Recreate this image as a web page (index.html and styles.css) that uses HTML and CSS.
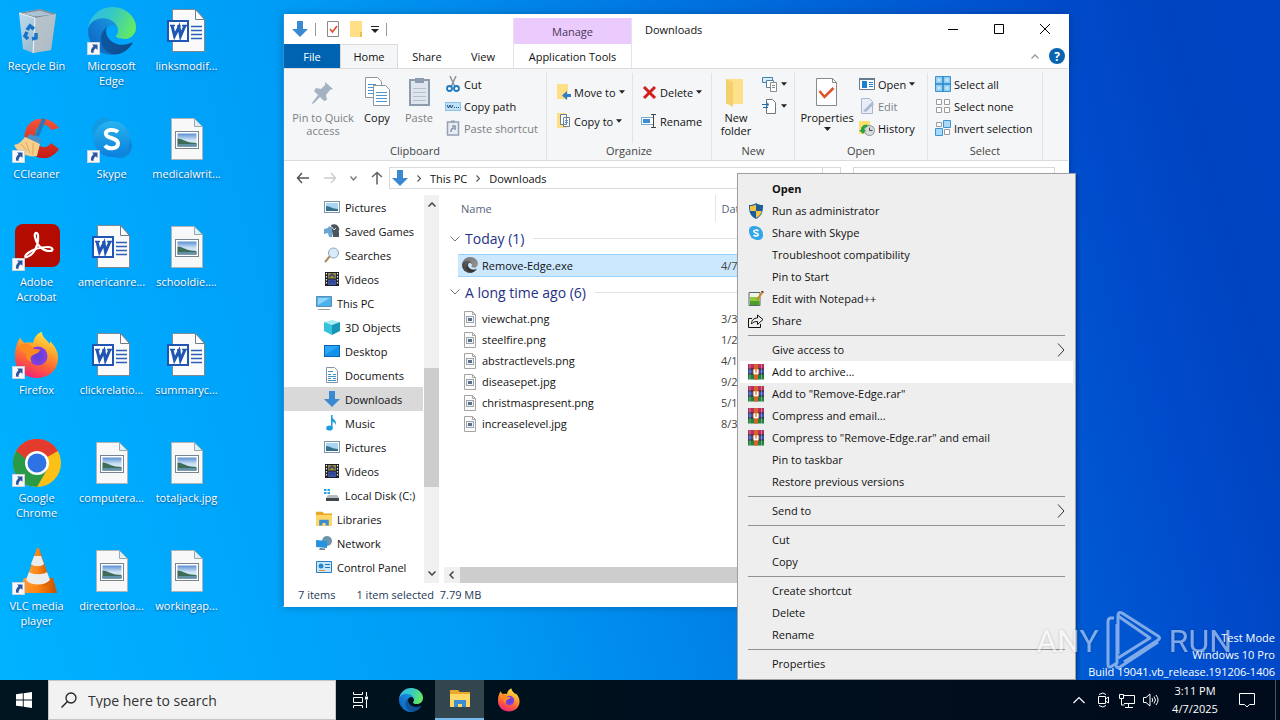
FILE: index.html
```html
<!DOCTYPE html>
<html lang="en">
<head>
<meta charset="utf-8">
<title>Downloads</title>
<link rel="stylesheet" href="styles.css">
</head>
<body>
<svg class="defs" aria-hidden="true">
  <defs>
    <linearGradient id="eg1" x1="0" y1="0" x2="1" y2="0"><stop offset="0" stop-color="#0c59a4"/><stop offset="1" stop-color="#114a8b"/></linearGradient>
    <linearGradient id="eg2" x1="1" y1="0" x2="0" y2="1"><stop offset="0" stop-color="#1b9de2"/><stop offset=".6" stop-color="#1277cf"/><stop offset="1" stop-color="#0d5bb5"/></linearGradient>
    <linearGradient id="eg3" x1="0" y1=".3" x2="1" y2=".6"><stop offset="0" stop-color="#2fbde6"/><stop offset=".45" stop-color="#36c9c4"/><stop offset="1" stop-color="#66eb5e"/></linearGradient>
    <linearGradient id="photo" x1="0" y1="0" x2="0" y2="1"><stop offset="0" stop-color="#5a8fd4"/><stop offset=".5" stop-color="#cfe3f4"/><stop offset="1" stop-color="#dce8f0"/></linearGradient>
    <linearGradient id="ffbody" x1=".7" y1="0" x2=".3" y2="1"><stop offset="0" stop-color="#ffe847"/><stop offset=".35" stop-color="#ffa52d"/><stop offset=".65" stop-color="#ff6138"/><stop offset="1" stop-color="#f0207a"/></linearGradient>
    <radialGradient id="ffglobe"><stop offset="0" stop-color="#5a3fd8"/><stop offset="1" stop-color="#8a3fe0"/></radialGradient>
    <linearGradient id="cone" x1="0" y1="0" x2="1" y2="0"><stop offset="0" stop-color="#ffa03c"/><stop offset=".5" stop-color="#ff8412"/><stop offset="1" stop-color="#c85000"/></linearGradient>
    <linearGradient id="bin" x1="0" y1="0" x2="1" y2="1"><stop offset="0" stop-color="#e4e9ee"/><stop offset="1" stop-color="#9aa7b3"/></linearGradient>
    <linearGradient id="skype" x1="0" y1="0" x2="0" y2="1"><stop offset="0" stop-color="#28b4ee"/><stop offset="1" stop-color="#0b7fdc"/></linearGradient>
    <linearGradient id="ccred" x1="0" y1="0" x2="0" y2="1"><stop offset="0" stop-color="#f4553a"/><stop offset="1" stop-color="#c41a14"/></linearGradient>
  </defs>
  <symbol id="edge" viewBox="0 0 256 256">
    <path fill="url(#eg1)" d="M231 190.500a94 94 0 0 1-10.500 4.700 102 102 0 0 1-35.900 6.500c-47.300 0-88.500-32.600-88.500-74.300a31.500 31.500 0 0 1 16.400-27.300c-42.800 1.800-53.800 46.400-53.800 72.500 0 73.900 68.100 81.400 82.800 81.400 7.900 0 19.800-2.300 27-4.600l1.300-.4a128.300 128.300 0 0 0 66.600-52.800 4 4 0 0 0-5.400-5.700z"/>
    <path fill="url(#eg2)" d="M105.700 241.400a79 79 0 0 1-22.700-21.300 80.700 80.700 0 0 1 29.500-120c3.100-1.500 8.500-4.100 15.500-4a32.400 32.400 0 0 1 25.700 13 31.900 31.900 0 0 1 6.400 18.700c0-.2 24.500-79.600-80-79.600-43.900 0-80 41.600-80 78.200a130 130 0 0 0 12.100 56 128 128 0 0 0 156.400 67.100 75.600 75.600 0 0 1-62.900-8.100z"/>
    <path fill="url(#eg3)" d="M152.300 148.900c-.8 1-3.300 2.500-3.300 5.600 0 2.600 1.700 5.100 4.700 7.200 14.400 10 41.500 8.700 41.600 8.700a59.600 59.600 0 0 0 30.300-8.300 61.400 61.400 0 0 0 30.400-52.900c.3-22.400-8-37.300-11.300-43.900C223.500 23.800 177.700 0 128 0A128 128 0 0 0 0 126.200c.5-36.500 36.800-66 80-66 3.500 0 23.500.3 42 10 16.300 8.600 24.900 18.900 30.900 29.200 6.100 10.700 7.200 24.200 7.200 29.600s-2.700 13.300-7.800 19.900z"/>
  </symbol>
  <symbol id="lnk" viewBox="0 0 13 13">
    <rect x=".5" y=".5" width="12" height="12" fill="#f7f9fc" stroke="#c9d3de"/>
    <path d="M5 2.500h5.500V8L8.800 6.300C7 7.500 6.500 9 6.500 11L4 10.500C3.600 8 4.600 5.700 6.600 4.200z" fill="#2c55a0"/>
  </symbol>
  <symbol id="word" viewBox="2 -1 48 48">
    <path d="M11.500 1.500h23l9 10v32h-32z" fill="#fafafa" stroke="#7d8a96"/>
    <path d="M34.500 1.500v10h9z" fill="#fff" stroke="#6f7d89"/>
    <path d="M30 18.500h11M30 22.500h11M30 26.500h11M30 30.500h11" stroke="#2b5fb8" stroke-width="1.300"/>
    <rect x="7" y="13" width="20" height="20" fill="#fff" stroke="#1f55b3" stroke-width="2"/>
    <path d="M11 17.500l2.500 10.500L18 19l1.500 9L24 17.500" fill="none" stroke="#1f55b3" stroke-width="3"/>
    <path d="M9 17.500h5M16 18h3.500M21 17.500h5" stroke="#1f55b3" stroke-width="1.500"/>
  </symbol>
  <symbol id="imgfile" viewBox="0 -1 48 48">
    <path d="M8.500 2.500h23l8 8v33h-31z" fill="#f8f8f8" stroke="#aeb4b8"/>
    <path d="M31.500 2.500v8h8z" fill="#d9effa" stroke="#9aa"/>
    <rect x="12.500" y="15.500" width="23" height="17" fill="#fff" stroke="#77838f"/>
    <rect x="14.500" y="17.500" width="19" height="13" fill="url(#photo)"/>
    <path d="M14.500 22.500c4 0 8 3 13 4l6 .5v3.500h-19z" fill="#3c6b57"/>
    <path d="M14.500 28h19v2.500h-19z" fill="#6390a8"/>
  </symbol>
  <symbol id="imgsmall" viewBox="0 0 16 16">
    <path d="M2.500 .5h8l3 3v12h-11z" fill="#fbfbfb" stroke="#a4a4a4"/>
    <path d="M10.500 .5v3h3" fill="none" stroke="#a4a4a4"/>
    <rect x="4.500" y="5.500" width="7" height="6" fill="#f1f4f7" stroke="#9aa4ad"/><rect x="6" y="7" width="4" height="3" fill="#587089"/>
  </symbol>
  <symbol id="firefox" viewBox="0 0 48 48">
    <path d="M4 13c1-4 3-5 3-7 1 3 3 5 5 6 3-1 5-1 8 0 1-5 4-10 9-11 0 5 4 7 8 12 0-2 0-2 0-3 5 5 9 12 8 19-1 11-10 18-21 18S2 39 2 27c0-5 0-9 2-14z" fill="url(#ffbody)"/>
    <circle cx="25" cy="25" r="9.500" fill="url(#ffglobe)"/>
    <path d="M6 15c6-4 12-2 15 3 2 0 5 0 6 1-1 3-5 4-7 5-3 2-3 4-1 7-5-1-7-5-6-9-4-1-6-3-7-7z" fill="#ff8a1f"/>
  </symbol>
  <symbol id="arrowdn" viewBox="0 0 16 16"><path d="M5 0h6v8h5l-8 8-8-8h5z" fill="#3a8ad2"/></symbol>
  <symbol id="car" viewBox="0 0 7 4"><path d="M0 0h7L3.500 4z" fill="#222"/></symbol>
  <symbol id="pic" viewBox="0 0 16 16"><rect x=".5" y="2.500" width="15" height="11" fill="#fff" stroke="#7f95a8"/><path d="M2 4h12v8H2z" fill="#a9d6f2"/><path d="M2 7c4 0 6 3 12 3v2H2z" fill="#35718c"/></symbol>
  <symbol id="vid" viewBox="0 0 16 16"><rect x="1" y="1" width="14" height="14" fill="#1d1d22"/><rect x="4" y="2" width="8" height="5.500" fill="#9a8a35"/><rect x="4" y="8.500" width="8" height="5.500" fill="#3b53a8"/><path d="M5 6l3-3 3 3M5 12l3-2 3 2" stroke="#2b3d80" stroke-width="1.500" fill="none"/><path d="M2.500 2v12M13.500 2v12" stroke="#eee" stroke-width="1.200" stroke-dasharray="1.500 1.500"/></symbol>
  <symbol id="explorer" viewBox="0 0 24 24"><path d="M2 3h8l2 2h10v15H2z" fill="#e9a82a"/><path d="M2 7h20v13H2z" fill="#ffd766"/><path d="M6 20v-7h12v7h-4v-3h-4v3z" fill="#3b8ed0"/></symbol>
  <symbol id="rar" viewBox="0 0 16 16"><rect width="16" height="5" fill="#b8305e"/><rect y="5" width="16" height="5" fill="#3d51a8"/><rect y="10" width="16" height="5.500" fill="#24803f"/><path d="M0 5h16M0 10h16" stroke="#26202a"/><rect x="6" width="4" height="15.500" fill="#d9622a"/><rect x="5" y="5" width="6" height="5.500" fill="#e8873c"/><path d="M6.500 5.500v4h3v-4" fill="none" stroke="#fff" stroke-width="1.500"/><path d="M2 0v15.500M13.500 0v15.500" stroke="#fff" stroke-opacity=".35"/></symbol>
  <symbol id="sq4" viewBox="0 0 16 16"><path d="M1.500 1.500h5v5h-5zM9.500 1.500h5v5h-5zM1.500 9.500h5v5h-5zM9.500 9.500h5v5h-5z" fill="#fff" stroke="#9a9a9a"/></symbol>
</svg>

<main class="desktop">
  <div class="icons">
    <a class="ico" href="#"><svg viewBox="0 0 48 48"><path d="M6 6l21-4 16 5-5 36-18 3-10-4z" fill="url(#bin)" opacity=".85"/><path d="M6 6l21-4 16 5-21 4z" fill="#7b8790"/><path d="M9 6.500l18-3 13 4-18 2z" fill="#a9c3d4"/><path d="M22 11l21-4-5 36-18 3z" fill="#b9c0c6" opacity=".8"/><path d="M6 6l16 5-2 35" fill="none" stroke="#f2f5f7"/><g fill="none" stroke="#1673c9" stroke-width="3.500"><path d="M14 23l3-4 4 3"/><path d="M23 26l0 5-4 1"/><path d="M15 32l-3-3 2-4"/></g></svg><span>Recycle Bin</span></a>
    <a class="ico" href="#"><svg viewBox="0 0 48 48"><path d="M46 13C38 1 19 0 13 14c-5 13 3 28 16 29 7 1 13-3 17-9l-8-6c-4 6-11 5-14 0-4-8-1-16 4-18 5-1 8 1 10 5z" fill="url(#ccred)"/><path d="M31 4l-7 17" stroke="#2b78b8" stroke-width="4"/><path d="M17 19l12 5-3 6-14-6z" fill="#4a90c8"/><path d="M12 22l15 7-3 12c-9 2-19-3-23-11 5-1 8-4 11-8z" fill="#f6cf8e"/><path d="M8 29l6 7M13 27l4 11M20 28v12" stroke="#dba75b"/></svg><svg class="link"><use href="#lnk"/></svg><span>CCleaner</span></a>
    <a class="ico" href="#"><svg viewBox="0 0 48 48"><rect x="2" y="1" width="45" height="43" rx="8" fill="#b30b00"/><path d="M14 34c6-2 12-10 11-22-1-4-4-2-3 2 2 9 8 14 15 14 4 0 3-4-2-4-9 0-16 3-20 6-4 3-3 5-1 4z" fill="none" stroke="#fff" stroke-width="2.200"/></svg><svg class="link"><use href="#lnk"/></svg><span>Adobe Acrobat</span></a>
    <a class="ico" href="#"><svg><use href="#firefox"/></svg><svg class="link"><use href="#lnk"/></svg><span>Firefox</span></a>
    <a class="ico" href="#"><svg viewBox="0 0 48 48"><circle cx="24" cy="24" r="24" fill="#fbc116"/><path d="M24 24L3.200 12a24 24 0 0 1 41.600 0z" fill="#e33b2e"/><path d="M3.200 12A24 24 0 0 0 24 48l10.400-18z" fill="#2a9a46"/><path d="M3.200 12l10.400 18L24 13z" fill="#2a9a46"/><path d="M3.200 12A24 24 0 0 1 44.800 12H24A12 12 0 0 0 13 20z" fill="#e33b2e"/><circle cx="24" cy="24" r="12" fill="#fff"/><circle cx="24" cy="24" r="9.500" fill="#2f72e4"/></svg><svg class="link"><use href="#lnk"/></svg><span>Google Chrome</span></a>
    <a class="ico" href="#"><svg viewBox="0 0 48 48"><path d="M11 31h29l4 15H5z" fill="url(#cone)"/><path d="M24 1h2l11 33c-4 8-20 8-24 0z" fill="url(#cone)"/><path d="M21 9h7l3 8c-3 3-10 3-13 0z" fill="#ececec"/><path d="M16 25c4 3 14 3 18 0l3 8c-5 6-19 6-24 0z" fill="#ececec"/></svg><svg class="link"><use href="#lnk"/></svg><span>VLC media player</span></a>

    <a class="ico" href="#"><svg><use href="#edge"/></svg><svg class="link"><use href="#lnk"/></svg><span>Microsoft Edge</span></a>
    <a class="ico" href="#"><svg viewBox="0 0 48 48"><circle cx="16" cy="15" r="12" fill="#129be4"/><circle cx="32" cy="31" r="12" fill="#0f86d8"/><circle cx="24" cy="24" r="18" fill="url(#skype)"/><path d="M30 17c-3-3-13-3-12 2 0 5 12 3 12 9.500 0 6-10 6-13 2" fill="none" stroke="#fff" stroke-width="4"/></svg><svg class="link"><use href="#lnk"/></svg><span>Skype</span></a>
    <a class="ico" href="#"><svg><use href="#word"/></svg><span>americanre...</span></a>
    <a class="ico" href="#"><svg><use href="#word"/></svg><span>clickrelatio...</span></a>
    <a class="ico" href="#"><svg><use href="#imgfile"/></svg><span>computera...</span></a>
    <a class="ico" href="#"><svg><use href="#imgfile"/></svg><span>directorloa...</span></a>

    <a class="ico" href="#"><svg><use href="#word"/></svg><span>linksmodif...</span></a>
    <a class="ico" href="#"><svg><use href="#imgfile"/></svg><span>medicalwrit...</span></a>
    <a class="ico" href="#"><svg><use href="#imgfile"/></svg><span>schooldie....</span></a>
    <a class="ico" href="#"><svg><use href="#word"/></svg><span>summaryc...</span></a>
    <a class="ico" href="#"><svg><use href="#imgfile"/></svg><span>totaljack.jpg</span></a>
    <a class="ico" href="#"><svg><use href="#imgfile"/></svg><span>workingap...</span></a>
  </div>

  <section class="window">
    <header class="head">
      <div class="head-left">
        <div class="qat">
          <svg class="i16"><use href="#arrowdn"/></svg><i class="bar"></i>
          <svg class="i16" viewBox="0 0 16 16"><path d="M2.500.5h11v15h-11z" fill="#fff" stroke="#8a8a8a"/><path d="M5 8l2.500 3L12 5" fill="none" stroke="#d9512c" stroke-width="1.700"/></svg>
          <svg class="i16" viewBox="0 0 16 16"><path d="M2 0h12v16H2z" fill="#ffdf85"/><path d="M12 11h2v5h-2z" fill="#e9bf4f"/></svg>
          <svg class="qdrop" viewBox="0 0 8 7"><path d="M0 .5h8" stroke="#222"/><path d="M0 3h8L4 7z" fill="#222"/></svg><i class="bar"></i>
        </div>
        <nav class="tabs"><button class="tab file">File</button><button class="tab home">Home</button><button class="tab share">Share</button><button class="tab view">View</button></nav>
      </div>
      <div class="ctx"><div class="ctx-top">Manage</div><button class="tab">Application Tools</button></div>
      <div class="head-right">
        <div class="title"><h1>Downloads</h1>
          <div class="controls">
            <button aria-label="Minimize"><svg viewBox="0 0 10 10"><path d="M0 5.500h10" stroke="#000"/></svg></button>
            <button aria-label="Maximize"><svg viewBox="0 0 10 10"><path d="M.5.5h9v9h-9z" fill="none" stroke="#000"/></svg></button>
            <button aria-label="Close"><svg viewBox="0 0 10 10"><path d="M0 0l10 10M10 0L0 10" stroke="#000"/></svg></button>
          </div>
        </div>
        <div class="help"><svg class="fold" viewBox="0 0 8 5"><path d="M.5 4.500L4 1l3.500 3.500" fill="none" stroke="#999" stroke-width="1.300"/></svg><button class="q" aria-label="Help">?</button></div>
      </div>
    </header>

    <div class="ribbon">
      <div class="group g-clip">
        <div class="tools">
          <button class="big dim pin"><svg viewBox="0 0 32 32"><path d="M18 6l8 7-3 1-4 5 1 5-3 1-4-4-7 7-1-1 6-8-4-4 2-3 5 1 4-4z" fill="#a5b2c2"/></svg>Pin to Quick access</button>
          <button class="big copy"><svg viewBox="0 0 32 32"><g fill="#fff" stroke="#8a97a3"><path d="M4.500 1.500h12l4 4v16h-16z"/><path d="M12.500 9.500h12l4 4v16h-16z"/></g><path d="M7 8.500h8M7 11.500h5M7 14.500h5M7 17.500h5M15 16.500h11M15 19.500h11M15 22.500h11M15 25.500h11" stroke="#4f94cf"/></svg>Copy</button>
          <button class="big dim paste"><svg viewBox="0 0 32 32"><rect x="7" y="4" width="19" height="25" fill="#dfe5ec" stroke="#8d9bae" stroke-width="2"/><path d="M12 2h9v5h-9z" fill="#8d9bae"/><path d="M10 12.500h13M10 16.500h13M10 20.500h13M10 24.500h13" stroke="#b6c0cc"/></svg>Paste</button>
          <div class="stack">
            <button class="row"><svg viewBox="0 0 16 16"><path d="M5 0l5 11M11 0L6 11" stroke="#8b959e" stroke-width="1.500"/><circle cx="4.500" cy="12.500" r="2.500" fill="none" stroke="#1e7ac0" stroke-width="1.800"/><circle cx="11.500" cy="12.500" r="2.500" fill="none" stroke="#1e7ac0" stroke-width="1.800"/></svg>Cut</button>
            <button class="row"><svg viewBox="0 0 16 16"><rect x=".5" y="4.500" width="15" height="8" fill="#bfe0f7" stroke="#8ec0e6"/><path d="M2 7l1.500 3L5 7l1.500 3L8 7M9 9.500h1M11 9.500h1M13 9.500h1" fill="none" stroke="#1b4d7a"/></svg>Copy path</button>
            <button class="row dim"><svg viewBox="0 0 16 16"><rect x="2.500" y="2" width="11" height="13" fill="#e8edf3" stroke="#93a1b3" stroke-width="1.500"/><path d="M6 .5h4v2H6z" fill="#93a1b3"/><path d="M6 12c0-3 1-4 3-4M7 6h3v4" fill="none" stroke="#8191b0" stroke-width="1.500"/></svg>Paste shortcut</button>
          </div>
        </div><div class="glabel">Clipboard</div>
      </div>
      <div class="group g-org">
        <div class="tools">
          <div class="stack wide div">
            <button class="row"><svg viewBox="0 0 16 16"><path d="M2 0h11v15H2z" fill="#ffdf85"/><path d="M16 10h-4V7l-5 4.500 5 4.500v-3h4z" fill="#2e7fc6"/></svg>Move to<svg class="car"><use href="#car"/></svg></button>
            <button class="row"><svg viewBox="0 0 16 16"><path d="M2 0h9v15H2z" fill="#ffdf85"/><path d="M5.500 1.500h6v10h-6zM8.500 4.500h6v9h-6z" fill="#fff" stroke="#6b7f93"/><path d="M10 7.500h3M10 9.500h3" stroke="#4f94cf"/></svg>Copy to<svg class="car"><use href="#car"/></svg></button>
          </div>
          <div class="stack wide">
            <button class="row"><svg viewBox="0 0 16 16"><path d="M3 3l11 11M14 3L3 14" stroke="#d1201b" stroke-width="3"/></svg>Delete<svg class="car"><use href="#car"/></svg></button>
            <button class="row"><svg viewBox="0 0 16 16"><rect x=".5" y="4.500" width="12" height="7" fill="#fff" stroke="#7fa8c9"/><path d="M2 6h7v4H2z" fill="#3c8fd6"/><path d="M10 1.500h5M10 14.500h5M12.500 2v12" stroke="#444"/></svg>Rename</button>
          </div>
        </div><div class="glabel">Organize</div>
      </div>
      <div class="group g-new">
        <div class="tools">
          <button class="big newf"><svg viewBox="0 0 32 32"><path d="M6 3h17v25H6z" fill="#ffe08a"/><path d="M6 3l7 3v25l-7-4z" fill="#f5cf6b"/></svg>New folder</button>
          <div class="stack">
            <button class="row" aria-label="New item"><svg viewBox="0 0 16 16"><path d="M.5 1.500h10v5H.5z" fill="#d8ecf8" stroke="#3c83b4"/><path d="M4.500 4.500h7v7h-7z" fill="#fff" stroke="#5a7f9c"/><path d="M8.500 6.500h6v9h-6z" fill="#fff" stroke="#8a8a8a"/><path d="M10 9.500h3M10 11.500h3" stroke="#888"/></svg><svg class="car"><use href="#car"/></svg></button>
            <button class="row" aria-label="Easy access"><svg viewBox="0 0 16 16"><path d="M4.500 1.500h6l3 3v11h-9z" fill="#fff" stroke="#777"/><path d="M0 6.500h6M1 9.500h5M4 4l3 2.500L4 9" fill="none" stroke="#1e6fb0"/></svg><svg class="car"><use href="#car"/></svg></button>
          </div>
        </div><div class="glabel">New</div>
      </div>
      <div class="group g-open">
        <div class="tools">
          <button class="big prop"><svg viewBox="0 0 32 32"><path d="M5.500 2.500h16l4 4v23h-20z" fill="#fff" stroke="#8a8a8a"/><path d="M21.500 2.500v4h4" fill="none" stroke="#8a8a8a"/><path d="M8.500 15l5 6 9-9" fill="none" stroke="#dd5427" stroke-width="2.500"/></svg>Properties<svg class="car"><use href="#car"/></svg></button>
          <div class="stack">
            <button class="row"><svg viewBox="0 0 16 16"><path d="M.5 2.500h15v11H.5z" fill="#fff" stroke="#667b8e"/><path d="M0 2h16v2H0z" fill="#667b8e"/><path d="M3 5h5v7H3z" fill="#1c7fd0"/><path d="M10 6.500h4M10 8.500h4M10 10.500h4" stroke="#1c7fd0"/></svg>Open<svg class="car"><use href="#car"/></svg></button>
            <button class="row dim"><svg viewBox="0 0 16 16"><path d="M2.500 .5h8l3 3v12h-11z" fill="#e9eef6" stroke="#a9b5c9"/><path d="M4 13l9-9 2 2-8 8z" fill="#a9b8d3"/></svg>Edit</button>
            <button class="row"><svg viewBox="0 0 16 16"><path d="M0 1h11v13H0z" fill="#ffdf70"/><circle cx="10.500" cy="10.500" r="5" fill="#d7dbde" stroke="#8b9399"/><path d="M10.500 7.500v3h3" fill="none" stroke="#444"/><path d="M2 10c0-4 3-6 7-5l-1 2C6 7 5 8 5 10h2l-3 4-4-4z" fill="#27a343"/></svg>History</button>
          </div>
        </div><div class="glabel">Open</div>
      </div>
      <div class="group g-sel">
        <div class="tools"><div class="stack">
          <button class="row"><svg viewBox="0 0 16 16"><path d="M.5.5h15v15H.5z" fill="#8fcdf5" stroke="#3d92cf"/><path d="M8 0v16M0 8h16" stroke="#2a86c8" stroke-width="1.500"/><path d="M2.500 2.500h3v3h-3zM10.500 2.500h3v3h-3zM2.500 10.500h3v3h-3zM10.500 10.500h3v3h-3z" fill="#c9e8fb"/></svg>Select all</button>
          <button class="row"><svg><use href="#sq4"/></svg>Select none</button>
          <button class="row"><svg viewBox="0 0 16 16"><path d="M1.500 2.500h5v4h-5zM9.500 9.500h5v5h-5z" fill="#fff" stroke="#9a9a9a"/><path d="M8.500.5h7v7h-7zM.5 8.500h7v7h-7z" fill="#a7d9fa" stroke="#3d92cf"/></svg>Invert selection</button>
        </div></div><div class="glabel">Select</div>
      </div>
    </div>

    <div class="address">
      <div class="arrows">
        <svg viewBox="0 0 14 14"><path d="M13 7H1.500M6 2L1.500 7 6 12" fill="none" stroke="#555" stroke-width="1.500"/></svg>
        <svg viewBox="0 0 14 14"><path d="M1 7h11.500M8 2l4.500 5L8 12" fill="none" stroke="#ccc" stroke-width="1.300"/></svg>
        <svg class="tiny" viewBox="0 0 7 5"><path d="M.5.500l3 3.500 3-3.500" fill="none" stroke="#777" stroke-width="1.300"/></svg>
        <svg viewBox="0 0 14 14"><path d="M7 13.500V1.500M2 6l5-4.500L12 6" fill="none" stroke="#666" stroke-width="1.600"/></svg>
      </div>
      <div class="crumbs"><svg class="i16"><use href="#arrowdn"/></svg><svg class="ch" viewBox="0 0 4 7"><path d="M.5.500l3 3-3 3" fill="none" stroke="#555" stroke-width="1.200"/></svg><span>This PC</span><svg class="ch" viewBox="0 0 4 7"><path d="M.5.500l3 3-3 3" fill="none" stroke="#555" stroke-width="1.200"/></svg><span>Downloads</span><i class="refresh"></i></div>
      <input class="find" type="text" aria-label="Search Downloads">
    </div>

    <div class="panes">
      <nav class="tree">
        <a href="#"><svg><use href="#pic"/></svg>Pictures</a>
        <a href="#"><svg viewBox="0 0 16 16"><path d="M7 2c4-2 7 0 8 3 1 2-1 3 0 5v4H9z" fill="#4d555c"/><path d="M0 6l4-1 1-2 3 2v9H5l-1-4-4 1z" fill="#6aa5d4"/><path d="M8 4l2 3 2-2" stroke="#ddd" fill="none"/></svg>Saved Games</a>
        <a href="#"><svg viewBox="0 0 16 16"><path d="M1 15l5-6" stroke="#b08a5b" stroke-width="2"/><circle cx="9.500" cy="6" r="5" fill="#d7ecf8" stroke="#8fa3b2"/></svg>Searches</a>
        <a href="#"><svg><use href="#vid"/></svg>Videos</a>
        <a class="top" href="#"><svg viewBox="0 0 16 16"><path d="M.5 1.500h15v10H.5z" fill="#4ab3ee" stroke="#5d8db0"/><path d="M2 3h12L2 10z" fill="#8fd4fa"/><path d="M2 14.500h12" stroke="#8fa1ae"/></svg>This PC</a>
        <a href="#"><svg viewBox="0 0 16 16"><path d="M0 3l8-2 8 2-8 3z" fill="#a8ecf4"/><path d="M0 3l8 3v10l-8-4z" fill="#35c3dc"/><path d="M16 3L8 6v10l8-4z" fill="#1598b8"/></svg>3D Objects</a>
        <a href="#"><svg viewBox="0 0 16 16"><path d="M0 2h16v12H0z" fill="#0a66b4"/><path d="M1 3h14v10H1z" fill="#1391ea"/><path d="M1 3h14L1 12z" fill="#2aa6f6"/></svg>Desktop</a>
        <a href="#"><svg viewBox="0 0 16 16"><path d="M2.500.5h8l3 3v12h-11z" fill="#fff" stroke="#8594a3"/><path d="M4 4.500h5M4 7.500h3M9 7.500h3M4 9.500h8M4 11.500h3M9 11.500h3M4 13.500h8" stroke="#3f93c9"/></svg>Documents</a>
        <a class="on" href="#"><svg><use href="#arrowdn"/></svg>Downloads</a>
        <a href="#"><svg viewBox="0 0 16 16"><path d="M7 0c0 4 6 4 5 10-1-3-3-3-4-3v6H7z" fill="#1f9be0"/><path d="M7 0h1.500v13H7z" fill="#1f9be0"/><ellipse cx="5.500" cy="13" rx="3.300" ry="2.600" fill="#1f9be0"/></svg>Music</a>
        <a href="#"><svg><use href="#pic"/></svg>Pictures</a>
        <a href="#"><svg><use href="#vid"/></svg>Videos</a>
        <a href="#"><svg viewBox="0 0 16 16"><path d="M0 2h2.500v2H0zM3.500 2H6v2H3.500zM0 5h2.500v2H0zM3.500 5H6v2H3.500z" fill="#21a7e0"/><path d="M4 8h9l2 3H2z" fill="#b6bbbf"/><path d="M2 11h13v3H2z" fill="#3f464c"/></svg>Local Disk (C:)</a>
        <a class="top" href="#"><svg viewBox="2 3 20 18"><use href="#explorer" width="24" height="24"/></svg>Libraries</a>
        <a class="top" href="#"><svg viewBox="0 0 16 16"><circle cx="11" cy="6" r="5" fill="#6f94ae"/><path d="M0 5l11 1v7L0 12z" fill="#2694dc"/><path d="M4 13l5 .5v1.500H3z" fill="#6b8496"/></svg>Network</a>
        <a class="top" href="#"><svg viewBox="0 0 16 16"><path d="M.5 2.500h15v11H.5z" fill="#cbe8fa" stroke="#267fc0"/><circle cx="5" cy="7" r="2.500" fill="#2b87cb"/><path d="M9 5.500h5M9 8.500h5" stroke="#1f74b5"/><path d="M3 11.500h6" stroke="#e58c2a"/></svg>Control Panel</a>
      </nav>
      <div class="vbar">
        <svg viewBox="0 0 8 5"><path d="M.5 4.500L4 1l3.500 3.500" fill="none" stroke="#444" stroke-width="1.500"/></svg>
        <div class="thumb"></div>
        <svg viewBox="0 0 8 5"><path d="M.5.500L4 4 7.500.5" fill="none" stroke="#444" stroke-width="1.500"/></svg>
      </div>
      <div class="list">
        <table>
          <thead><tr><th class="name">Name</th><th>Date modified</th></tr></thead>
          <tbody>
            <tr class="sec first"><td colspan="2"><div><svg viewBox="0 0 10 6"><path d="M.5.5L5 5 9.500.5" fill="none" stroke="#777"/></svg>Today (1)<i></i></div></td></tr>
            <tr class="pick"><td><div><svg class="grey"><use href="#edge"/></svg>Remove-Edge.exe</div></td><td>4/7/2025</td></tr>
            <tr class="sec"><td colspan="2"><div><svg viewBox="0 0 10 6"><path d="M.5.5L5 5 9.500.5" fill="none" stroke="#777"/></svg>A long time ago (6)<i></i></div></td></tr>
            <tr><td><div><svg><use href="#imgsmall"/></svg>viewchat.png</div></td><td>3/3</td></tr>
            <tr><td><div><svg><use href="#imgsmall"/></svg>steelfire.png</div></td><td>1/2</td></tr>
            <tr><td><div><svg><use href="#imgsmall"/></svg>abstractlevels.png</div></td><td>4/1</td></tr>
            <tr><td><div><svg><use href="#imgsmall"/></svg>diseasepet.jpg</div></td><td>9/2</td></tr>
            <tr><td><div><svg><use href="#imgsmall"/></svg>christmaspresent.png</div></td><td>5/1</td></tr>
            <tr><td><div><svg><use href="#imgsmall"/></svg>increaselevel.jpg</div></td><td>8/3</td></tr>
          </tbody>
        </table>
        <div class="hbar"><svg viewBox="0 0 5 8"><path d="M4.500.5L1 4l3.500 3.500" fill="none" stroke="#444" stroke-width="1.500"/></svg><div class="hthumb"></div></div>
      </div>
    </div>
    <footer class="status"><span>7 items</span><span>1 item selected&nbsp; 7.79 MB</span></footer>
  </section>

  <ul class="menu">
    <li><button class="b">Open</button></li>
    <li><button><svg viewBox="0 0 16 16"><path d="M8 0c2 1.500 4 2 7 2 0 7-1 11-7 14C2 13 1 9 1 2c3 0 5-.5 7-2z" fill="#1c5d9c"/><path d="M8 1.500V8H2.200C2 6 2 4.500 2 3c2.500 0 4-.5 6-1.500zM8 8h5.800c-.5 3-2 5-5.800 6.800z" fill="#f6c443"/></svg>Run as administrator</button></li>
    <li><button><svg viewBox="0 0 16 16"><rect x="1" y="1" width="10" height="10" rx="4.500" fill="#34a6e8"/><rect x="5" y="5" width="10" height="10" rx="4.500" fill="#34a6e8"/><circle cx="8" cy="8" r="6.500" fill="#34a6e8"/><path d="M10.500 6C9 4.500 5.500 5 5.800 6.500 6 8.500 10.300 7.500 10.300 9.500 10.300 11.500 6.500 11.500 5.500 10" fill="none" stroke="#fff" stroke-width="1.500"/></svg>Share with Skype</button></li>
    <li><button>Troubleshoot compatibility</button></li>
    <li><button>Pin to Start</button></li>
    <li><button><svg viewBox="0 0 16 16"><path d="M1 1.500h11v13H1z" fill="#eef5e6" stroke="#5b6770"/><path d="M2 6h9.500v8H2z" fill="#8ecb3c"/><path d="M2 10h9.500v4H2z" fill="#4f9d2d"/><path d="M14.500 1L9 9" stroke="#c9852e" stroke-width="2"/><path d="M13.500 0l2 1.500" stroke="#7b2020" stroke-width="1.500"/></svg>Edit with Notepad++</button></li>
    <li><button><svg viewBox="0 0 16 16"><path d="M4 5.500H.5v9h12V11" fill="none" stroke="#111"/><path d="M9.500 2v3C6 5 3.500 7 3.500 11 5 9 7 8.500 9.500 8.500v3L15 6.500z" fill="none" stroke="#111"/></svg>Share</button></li>
    <li class="sep"></li>
    <li><button>Give access to<svg class="sub" viewBox="0 0 8 14"><path d="M1 .5L7 7l-6 6.500" fill="none" stroke="#333"/></svg></button></li>
    <li><button class="hot"><svg><use href="#rar"/></svg>Add to archive...</button></li>
    <li><button><svg><use href="#rar"/></svg>Add to "Remove-Edge.rar"</button></li>
    <li><button><svg><use href="#rar"/></svg>Compress and email...</button></li>
    <li><button><svg><use href="#rar"/></svg>Compress to "Remove-Edge.rar" and email</button></li>
    <li><button>Pin to taskbar</button></li>
    <li><button>Restore previous versions</button></li>
    <li class="sep"></li>
    <li><button>Send to<svg class="sub" viewBox="0 0 8 14"><path d="M1 .5L7 7l-6 6.500" fill="none" stroke="#333"/></svg></button></li>
    <li class="sep"></li>
    <li><button>Cut</button></li>
    <li><button>Copy</button></li>
    <li class="sep"></li>
    <li><button>Create shortcut</button></li>
    <li><button>Delete</button></li>
    <li><button>Rename</button></li>
    <li class="sep"></li>
    <li><button>Properties</button></li>
  </ul>

  <div class="build"><div>Test Mode</div><div>Windows 10 Pro</div><div>Build 19041.vb_release.191206-1406</div></div>
  <div class="brand"><span>ANY</span><svg viewBox="0 0 56 62"><g fill="none" stroke="#fff" stroke-width="3" stroke-linejoin="round"><path d="M8 8H5Q2 8 2 12v42q0 5 4 2l5-3V14"/><path d="M12 44V6q0-5 4-3l36 23q3 2 0 4L18 52"/><path d="M12 6l32 22-32 20M52 32L14 57q-4 2-4-3"/></g></svg><span>RUN</span></div>
</main>

<footer class="taskbar">
  <button class="tb" aria-label="Start"><svg viewBox="0 0 16 16"><path d="M0 2.300L6.800 1.300v6.200H0zM7.700 1.200L16 0v7.500H7.700zM0 8.400h6.800v6.200L0 13.700zM7.700 8.400H16V16l-8.300-1.200z" fill="#fff"/></svg></button>
  <label class="search"><svg viewBox="0 0 16 16"><circle cx="10" cy="6" r="5" fill="none" stroke="#222" stroke-width="1.300"/><path d="M6.500 9.500L.5 15.500" stroke="#222" stroke-width="1.400"/></svg><input type="text" placeholder="Type here to search" aria-label="Type here to search"></label>
  <button class="tb view-btn" aria-label="Task View"><svg viewBox="0 0 16 16"><path d="M1.500 0v2.500h9V0M1.500 16v-2.500h9V16M1.500 5.500h9v5h-9zM14.500 0v4M14.500 8v8" fill="none" stroke="#fff"/><path d="M13 4.500h3v3h-3z" fill="#fff"/></svg></button>
  <button class="tb app" aria-label="Microsoft Edge"><svg><use href="#edge"/></svg></button>
  <button class="tb app active" aria-label="File Explorer"><svg><use href="#explorer"/></svg></button>
  <button class="tb app" aria-label="Firefox"><svg><use href="#firefox"/></svg></button>
  <div class="tray">
    <svg viewBox="0 0 16 16"><path d="M2.500 11L8 5.500l5.500 5.500" fill="none" stroke="#fff" stroke-width="1.200"/></svg>
    <svg viewBox="0 0 16 16"><path d="M3.500 4.500h7v7h-7zM10.500 7l3-2v6l-3-2M4 2.500Q8-.5 11 2.500M4 13.500q4 3 7 0" fill="none" stroke="#fff"/></svg>
    <svg viewBox="0 0 16 16"><path d="M5 3.500h10.500v8H5M9.500 11.500V15M6 15.500h8M.5 2.500h4v4h-4zM2.500 6.500V13h3" fill="none" stroke="#fff"/></svg>
    <svg viewBox="0 0 16 16"><path d="M.5 5.500h2.500L7 2v12L3 10.500H.5zM9 6q1.500 2 0 4M11 4.500q3 3.500 0 7M13 3q4 5 0 10" fill="none" stroke="#fff"/></svg>
  </div>
  <div class="clock"><div>3:11 PM</div><div>4/7/2025</div></div>
  <button class="tb note" aria-label="Notifications"><svg viewBox="0 0 16 16"><path d="M.5 1.500h15v11h-5L8 15l-2.500-2.500h-5z" fill="none" stroke="#fff"/></svg></button>
  <button class="peek" aria-label="Show desktop"></button>
</footer>
</body>
</html>
```

FILE: styles.css
```css
* { box-sizing: border-box; }
body { margin: 0; min-height: 100vh; display: flex; flex-direction: column; font: 12px/15px "Open Sans", "Noto Sans", sans-serif; color: #111; overflow: hidden; }
button, input { font: inherit; color: inherit; border: 0; padding: 0; margin: 0; background: none; }
a { color: inherit; text-decoration: none; }
svg { flex: none; display: block; }
.defs { position: absolute; width: 0; height: 0; }
.i16 { width: 16px; height: 16px; }

.desktop { position: relative; flex: 1; overflow: hidden; background: linear-gradient(75deg, #00b2ff 0%, #00a9fd 14%, #009cf5 32%, #0082e8 50%, #0068da 66%, #004ccc 84%, #0043c0 92%, #0044c4 100%); }
.icons { display: grid; grid-auto-flow: column; grid-template-rows: repeat(6, 108px); grid-auto-columns: 75px; margin-left: -1px; padding-top: 7px; width: max-content; }
.ico { position: relative; display: flex; flex-direction: column; align-items: center; gap: 3px; color: #fff; text-align: center; font-size: 11px; text-shadow: 0 1px 2px rgba(0, 40, 90, .7); }
.ico svg { width: 48px; height: 48px; }
.ico .link { position: absolute; left: 13px; top: 35px; width: 13px; height: 13px; }
.ico span { max-width: 74px; }

.window { position: absolute; left: 283px; top: 14px; width: 786px; background: #fff; border: solid #2b8ede; border-width: 0 1px 1px; border-right-color: #fff; border-bottom-color: #fff; box-shadow: 0 0 8px rgba(0, 0, 0, .25); }
.head { display: flex; height: 54px; }
.head-left { width: 229px; display: flex; flex-direction: column; }
.qat { flex: 1; display: flex; align-items: center; gap: 7px; padding-left: 8px; }
.bar { width: 1px; height: 13px; background: #999; margin-right: 2px; }
.qdrop { width: 8px; height: 7px; }
.tabs { display: flex; height: 24px; }
.tab { height: 24px; text-align: center; font-size: 11px; }
.tab.file { width: 56px; background: #0063b1; color: #fff; }
.tab.home { width: 58px; background: #f5f6f7; border: 1px solid #dadbdc; border-bottom: 0; }
.tab.share { width: 58px; }
.tab.view { width: 54px; }
.ctx { width: 119px; margin-top: 4px; display: flex; flex-direction: column; border-right: 1px solid #eadff0; border-left: 1px solid #eadff0; font-size: 11px; text-align: center; }
.ctx-top { flex: 1; background: #ebcbfd; display: grid; place-items: center; color: #4b3558; }
.head-right { flex: 1; display: flex; flex-direction: column; }
.title { flex: 1; display: flex; align-items: center; justify-content: space-between; }
.title h1 { margin: 0; padding-left: 13px; font-size: 11px; font-weight: 400; }
.controls { display: flex; }
.controls button { width: 46px; height: 30px; display: grid; place-items: center; }
.controls svg { width: 10px; height: 10px; }
.help { height: 24px; display: flex; align-items: center; justify-content: flex-end; gap: 10px; padding-right: 3px; }
.fold { width: 8px; height: 5px; }
.q { width: 16px; height: 16px; border-radius: 8px; background: #0a63ae; color: #fff; font-weight: 700; }

.ribbon { display: flex; height: 93px; background: #f5f6f7; border-top: 1px solid #dadbdc; border-bottom: 1px solid #dadbdc; padding-top: 4px; font-size: 11px; }
.group { display: flex; flex-direction: column; border-right: 1px solid #e2e3e4; }
.g-clip { width: 263px; }
.g-org { width: 165px; }
.g-new { width: 83px; }
.g-open { width: 133px; }
.g-sel { width: 115px; }
.tools { flex: 1; display: flex; }
.glabel { text-align: center; color: #444; height: 17px; line-height: 15px; }
.big { display: flex; flex-direction: column; align-items: center; line-height: 13px; padding-top: 3px; gap: 3px; }
.big svg { width: 32px; height: 32px; }
.big .car { width: 7px; height: 4px; }
.pin { width: 74px; padding-left: 4px; }
.copy { width: 38px; }
.paste { width: 46px; margin-right: 3px; }
.newf { width: 48px; }
.prop { width: 62px; }
.dim { color: #7b7f84; }
.stack { display: flex; flex-direction: column; }
.row { display: flex; align-items: center; gap: 3px; height: 22px; white-space: nowrap; }
.row svg { width: 16px; height: 16px; }
.row .car { width: 6px; height: 4px; }
.wide { gap: 7px; padding: 8px 0 0 8px; }
.div { width: 86px; border-right: 1px solid #e2e3e4; }
.g-open .tools { padding-left: 1px; gap: 1px; }
.g-new .tools { gap: 2px; }
.g-sel .tools { padding-left: 7px; }

.address { display: flex; align-items: center; height: 34px; padding: 0 13px; gap: 12px; font-size: 11px; }
.arrows { display: flex; align-items: center; justify-content: space-between; width: 88px; margin: 0 -7px 0 -1px; }
.arrows svg { width: 14px; height: 14px; }
.arrows .tiny { width: 7px; height: 5px; }
.crumbs { flex: 1; display: flex; align-items: center; gap: 9px; height: 22px; border: 1px solid #d9d9d9; padding-left: 2px; }
.ch { width: 4px; height: 7px; }
.refresh { margin-left: auto; width: 18px; height: 20px; border-left: 1px solid #d9d9d9; }
.find { width: 202px; height: 22px; border: 1px solid #d9d9d9; }

.panes { display: flex; height: 388px; }
.tree { width: 140px; display: flex; flex-direction: column; }
.tree a { display: flex; align-items: center; gap: 5px; height: 24px; margin-right: 1px; padding-left: 40px; font-size: 11px; white-space: nowrap; }
.tree a.top { padding-left: 32px; }
.tree a.on { background: #d9d9d9; }
.tree svg { width: 16px; height: 16px; }
.vbar { width: 15px; background: #f0f0f0; display: flex; flex-direction: column; align-items: center; justify-content: space-between; padding: 7px 0; }
.vbar svg { width: 8px; height: 5px; }
.thumb { width: 15px; height: 119px; margin-top: 76px; background: #cdcdcd; }
.list { flex: 1; margin-left: 5px; display: flex; flex-direction: column; justify-content: space-between; font-size: 11px; }
.list table { border-collapse: collapse; margin: 0 9px 0 14px; table-layout: fixed; }
.list th { height: 27px; padding: 0 0 0 6px; text-align: left; font-weight: 400; color: #56647a; border-left: 1px solid #e5e5e5; }
.list th.name { width: 257px; padding-left: 3px; border: 0; }
.list td { height: 21px; padding: 0 0 0 6px; color: #444; }
.list td:first-child { padding-left: 4px; color: #111; }
.list td div { display: flex; align-items: center; gap: 4px; }
.list td svg { width: 16px; height: 16px; }
.list .sec td { height: 32px; padding-left: 0; font-size: 14px; color: #1e3287; }
.list .first td { padding-top: 2px; }
.list .sec div { margin-left: -8px; gap: 5px; }
.list .sec svg { width: 10px; height: 6px; }
.list .sec i { flex: 1; height: 1px; background: #e2e2e2; margin-left: 4px; }
.list .pick td { height: 22px; background: #cce8ff; border: solid #99d1ff; border-width: 1px 0; }
.grey { filter: grayscale(1) brightness(.75); }
.hbar { height: 16px; display: flex; align-items: center; gap: 6px; padding-left: 5px; background: #f0f0f0; }
.hbar svg { width: 5px; height: 8px; }
.hthumb { width: 480px; height: 16px; background: #cdcdcd; }
.status { height: 23px; display: flex; align-items: center; gap: 21px; padding-left: 14px; color: #1e395b; font-size: 11px; }

.menu { position: absolute; left: 737px; top: 173px; width: 339px; margin: 0; padding: 4px 2px; list-style: none; background: #eee; border: 1px solid #a0a0a0; box-shadow: 2px 2px 3px rgba(0, 0, 0, .25); font-size: 11px; line-height: 16px; }
.menu button { position: relative; display: flex; align-items: center; width: 100%; height: 22px; padding-left: 32px; text-align: left; }
.menu svg { position: absolute; left: 8px; width: 16px; height: 16px; }
.menu .sub { left: auto; right: 8px; width: 8px; height: 14px; }
.menu .hot { background: #fff; }
.menu .b { font-weight: 700; }
.sep { height: 7px; padding: 3px 8px; }
.sep::before { content: ""; display: block; height: 1px; background: #919191; }

.build { position: absolute; right: 5px; bottom: 0; text-align: right; color: #fff; font-size: 11px; line-height: 17px; }
.brand { position: absolute; right: 48px; bottom: 8px; display: flex; align-items: center; gap: 7px; color: #fff; opacity: .5; font: 32px/62px "Liberation Sans Narrow", "Roboto", sans-serif; text-shadow: 0 0 3px rgba(0, 0, 0, .4); }
.brand svg { width: 56px; height: 62px; }

.taskbar { display: flex; height: 40px; background: linear-gradient(90deg, #00151f, #000b1c); color: #fff; }
.tb { width: 48px; height: 40px; display: grid; place-items: center; }
.tb svg { width: 16px; height: 16px; }
.view-btn { margin-right: 2px; }
.app { width: 49px; }
.app svg { width: 24px; height: 24px; }
.active { background: #33454d; border-bottom: 2px solid #76b9ed; }
.search { display: flex; align-items: center; width: 288px; gap: 11px; padding-left: 12px; background: #f2f2f2; border: 1px solid #c6c6c6; color: #222; }
.search svg { width: 16px; height: 16px; }
.search input { flex: 1; font-size: 14px; outline: 0; }
.search input::placeholder { color: #333; opacity: 1; }
.tray { margin-left: auto; display: flex; align-items: center; gap: 8px; margin-right: 1px; }
.tray svg { width: 16px; height: 16px; }
.clock { width: 70px; display: flex; flex-direction: column; justify-content: center; text-align: center; font-size: 11px; line-height: 18px; }
.note { width: 33px; margin-right: 12px; }
.peek { width: 5px; border-left: 1px solid #4a5560; }
```
